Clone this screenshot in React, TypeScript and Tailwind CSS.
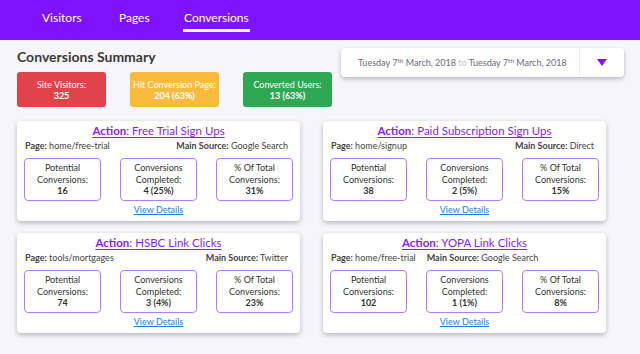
import React from "react";

interface ActionCardProps {
  title: string;
  page: string;
  source: string;
  potential: string;
  completed: string;
  share: string;
  tight?: boolean;
}

function ActionCard({ title, page, source, potential, completed, share, tight }: ActionCardProps) {
  return (
    <section className="flex flex-col w-[283px] h-[100px] bg-white rounded-[4px] shadow-[0px_2px_5px_rgba(0,0,0,0.25)] px-[7px] pt-[3px]">
      <h3 className="text-center text-[11.5px] leading-[14px] text-[#8a1cff] underline underline-offset-2">
        <span className="font-bold">Action</span>: {title}
      </h3>
      <div
        className={`flex mt-[2px] pl-[1px] pr-[5px] text-[9px] leading-[12px] text-[#444] whitespace-nowrap ${tight ? "gap-[11px]" : "justify-between"}`}
      >
        <p>
          <span className="font-bold">Page:</span> {page}
        </p>
        <p>
          <span className="font-bold">Main Source:</span> {source}
        </p>
      </div>
      <div className="flex justify-between mt-[6px]">
        {[
          ["Potential", "Conversions:", potential],
          ["Conversions", "Completed:", completed],
          ["% Of Total", "Conversions:", share],
        ].map(([a, b, v]) => (
          <div
            key={a}
            className="w-[77px] h-[43px] border border-[#b77cf5] rounded-[4px] flex flex-col items-center justify-center text-[9px] leading-[11.5px] text-[#333]"
          >
            <span>{a}</span>
            <span>{b}</span>
            <span className="font-bold">{v}</span>
          </div>
        ))}
      </div>
      <a className="self-center mt-[3px] text-[9px] leading-[12px] text-[#1f7ee0] underline">View Details</a>
    </section>
  );
}

export default function App() {
  return (
    <div className="w-[640px] h-[354px] bg-[#f6f5fa] font-['Lato',sans-serif] overflow-hidden">
      <nav className="h-[40px] bg-[#7f12ff] flex items-start pl-[42px] text-white text-[12px] leading-[16px]">
        <div className="mt-[10px] w-[77px]">Visitors</div>
        <div className="mt-[10px] w-[64px]">Pages</div>
        <div className="flex flex-col">
          <div className="mt-[10px] px-[1px]">Conversions</div>
          <div className="mt-[3px] h-[3px] bg-white" />
        </div>
      </nav>

      <div className="flex justify-between pl-[17px] pr-[16px] pt-[7px]">
        <div className="flex flex-col">
          <h1 className="text-[14px] leading-[18px] font-bold text-[#3a3a3a] mt-[1px]">Conversions Summary</h1>
          <div className="flex gap-[24px] mt-[6px] text-white text-[9px] leading-[11px] whitespace-nowrap">
            <div className="w-[89px] h-[35px] rounded-[3px] bg-[#e1434a] flex flex-col items-center justify-center">
              <span>Site Visitors:</span>
              <span className="font-bold">325</span>
            </div>
            <div className="w-[89px] h-[35px] rounded-[3px] bg-[#fabb3c] flex flex-col items-center justify-center">
              <span>Hit Conversion Page:</span>
              <span className="font-bold">204 (63%)</span>
            </div>
            <div className="w-[89px] h-[35px] rounded-[3px] bg-[#2fa854] flex flex-col items-center justify-center">
              <span>Converted Users:</span>
              <span className="font-bold">13 (63%)</span>
            </div>
          </div>
        </div>
        <div className="flex w-[283px] h-[29px] mt-[1px] bg-white rounded-[4px] shadow-[0px_2px_4px_rgba(0,0,0,0.25)] text-[9px] text-[#6f6a78] whitespace-nowrap">
          <div className="flex items-center pl-[17px] w-[239px] border-r border-[#eeeef2]">
            <span>
              Tuesday 7<sup className="text-[6.5px]">th</sup> March, 2018 <span className="text-[#c9c6d0]">to</span> Tuesday 7
              <sup className="text-[6.5px]">th</sup> March, 2018
            </span>
          </div>
          <div className="flex-1 flex items-center justify-center">
            <svg width="10" height="7" viewBox="0 0 10 7">
              <path d="M0 0 L10 0 L5 7 Z" fill="#7f12ff" />
            </svg>
          </div>
        </div>
      </div>

      <div className="grid grid-cols-[283px_283px] justify-between pl-[17px] pr-[34px] mt-[14px] gap-y-[12px]">
        <ActionCard title="Free Trial Sign Ups" page="home/free-trial" source="Google Search" potential="16" completed="4 (25%)" share="31%" />
        <ActionCard title="Paid Subscription Sign Ups" page="home/signup" source="Direct" potential="38" completed="2 (5%)" share="15%" />
        <ActionCard title="HSBC Link Clicks" page="tools/mortgages" source="Twitter" potential="74" completed="3 (4%)" share="23%" />
        <ActionCard title="YOPA Link Clicks" page="home/free-trial" source="Google Search" potential="102" completed="1 (1%)" share="8%" tight />
      </div>
    </div>
  );
}
